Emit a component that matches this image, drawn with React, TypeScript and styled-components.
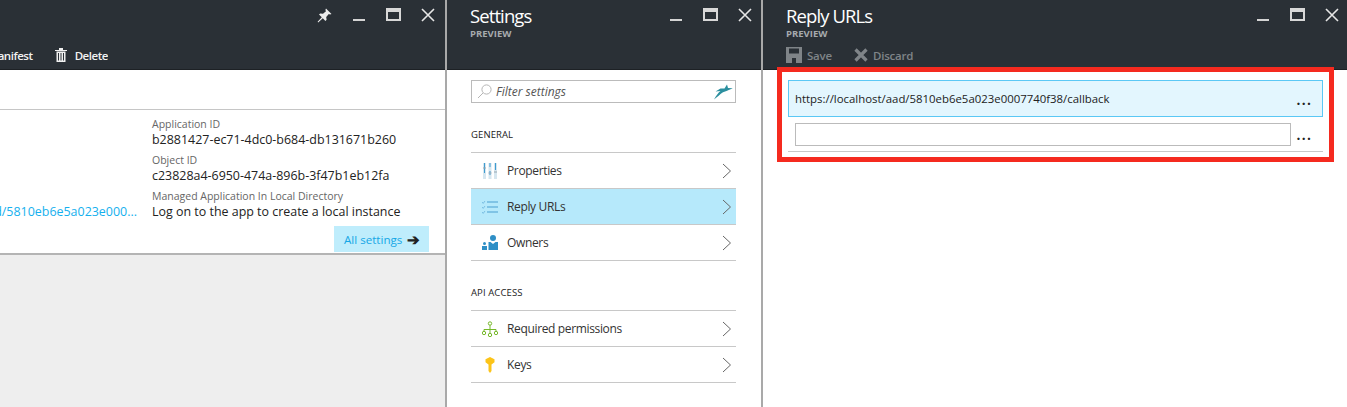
import styled, { createGlobalStyle } from "styled-components";

const GlobalStyle = createGlobalStyle`
  html, body {
    margin: 0;
    padding: 0;
    background: #fff;
    overflow: hidden;
  }
  * {
    box-sizing: border-box;
  }
  body {
    font-family: "Open Sans", "Noto Sans", "Liberation Sans", sans-serif;
    color: #222;
  }
`;

const PinIcon = () => (
  <svg width="15" height="15" viewBox="0 0 15 15">
    <path d="M9 0.5 14.5 6 13 6.6 11.8 6 9.2 9 9.6 11.8 8.4 13 5.8 10.2 1.2 14.4 0.6 13.8 4.8 9.2 2 6.6 3.2 5.4 6 5.8 9 3.2 8.4 2Z" fill="#ececec" />
  </svg>
);

const MinIcon = () => (
  <svg width="14" height="14" viewBox="0 0 14 14">
    <rect x="1" y="11" width="12" height="2" fill="#d4d4d4" />
  </svg>
);

const MaxIcon = () => (
  <svg width="15" height="14" viewBox="0 0 15 14">
    <path fillRule="evenodd" d="M0 0H15V13H0ZM2 4V11H13V4Z" fill="#d8d8d8" />
  </svg>
);

const CloseIcon = () => (
  <svg width="14" height="14" viewBox="0 0 14 14">
    <path d="M1 1 13 13M13 1 1 13" stroke="#e6e6e6" strokeWidth="1.6" />
  </svg>
);

const TrashIcon = () => (
  <svg width="12" height="14" viewBox="0 0 12 14">
    <path d="M0 2H12V3H0ZM4 0H8V2H4ZM1.5 3.5H10.5V14H1.5Z" fill="#f0f0f0" />
    <path d="M3.5 5V12.5M6 5V12.5M8.5 5V12.5" stroke="#2a3036" strokeWidth="1" />
  </svg>
);

const SaveIcon = () => (
  <svg width="16" height="16" viewBox="0 0 16 16">
    <path fillRule="evenodd" d="M0 0H16V16H0ZM3 1.5V6.5H13V1.5ZM6 11V16H10V11Z" fill="#7f8488" />
  </svg>
);

const DiscardIcon = () => (
  <svg width="14" height="14" viewBox="0 0 14 14">
    <path d="M1.5 1.5 12.5 12.5M12.5 1.5 1.5 12.5" stroke="#7f8488" strokeWidth="3.2" />
  </svg>
);

const SearchIcon = () => (
  <svg width="15" height="15" viewBox="0 0 15 15">
    <circle cx="9.5" cy="5.5" r="4.6" fill="none" stroke="#b5b5b5" />
    <path d="M6 9 1 14" stroke="#b5b5b5" />
  </svg>
);

const FilterMark = () => (
  <svg width="20" height="16" viewBox="0 0 20 16">
    <path d="M1 15.5 C3.5 11 5.5 8.5 7.5 7 L2.5 7.5 L7.5 4.6 L11.5 4.4 L14 0.5 L15 4 L19.8 4.2 L13.5 7 L10 8.2 C7 10 4.5 13 1 15.5Z" fill="#2b8f9f" />
  </svg>
);

const Chevron = () => (
  <svg width="10" height="16" viewBox="0 0 10 16">
    <path d="M1 1 8.5 8 1 15" fill="none" stroke="#666" strokeWidth="1" />
  </svg>
);

const PropertiesIcon = () => (
  <svg width="16" height="16" viewBox="0 0 16 16">
    <path d="M1 0H4V16H1ZM6.5 0H9.5V16H6.5ZM12 0H15V16H12Z" fill="#d6e6ef" />
    <path d="M2.5 0V10M8 0V4M8 8V12M13.5 0V7" stroke="#3e9bd0" strokeWidth="1" />
    <path d="M1 5H4M6.5 10H9.5M12 9H15" stroke="#9aa8b2" strokeWidth="1.2" />
  </svg>
);

const ListIcon = () => (
  <svg width="16" height="14" viewBox="0 0 16 14">
    <path d="M0 2 1.2 3.4 3 1M0 7 1.2 8.4 3 6M0 12 1.2 13.4 3 11" fill="none" stroke="#6bb4dc" strokeWidth="0.8" />
    <path d="M5 2H16M5 7H16M5 12H16" stroke="#4a9fd0" strokeWidth="1" />
  </svg>
);

const OwnersIcon = () => (
  <svg width="16" height="15" viewBox="0 0 16 15">
    <circle cx="11" cy="3" r="3" fill="#2f8fc6" />
    <path d="M6.5 7H8.5L11 9 13.5 7H16V15H6.5Z" fill="#2f8fc6" />
    <circle cx="2.5" cy="8.5" r="1.5" fill="#2f8fc6" />
    <path d="M0 11H5V15H0Z" fill="#2f8fc6" />
  </svg>
);

const PermissionsIcon = () => (
  <svg width="16" height="16" viewBox="0 0 16 16">
    <g fill="none" stroke="#76b82a" strokeWidth="1">
      <circle cx="8" cy="2.5" r="1.7" />
      <circle cx="2" cy="12" r="1.7" />
      <circle cx="8" cy="14" r="1.7" />
      <circle cx="14" cy="12" r="1.7" />
      <path d="M8 4.2V12.3M2 10.3V8.5H14V10.3" />
    </g>
  </svg>
);

const KeyIcon = () => (
  <svg width="16" height="16" viewBox="0 0 16 16">
    <path d="M8 0 12.5 2.2V5.2L9.5 7.5V14L8 16 6.5 14V7.5L3.5 5.2V2.2Z" fill="#fcc419" />
  </svg>
);

const Page = styled.div`
  position: relative;
  display: grid;
  grid-template-columns: 447px 316px 1fr;
  width: 1347px;
  height: 407px;
  overflow: hidden;
`;

const Blade = styled.section<{ $divider?: boolean }>`
  display: flex;
  flex-direction: column;
  min-width: 0;
  height: 407px;
  border-right: ${(p) => (p.$divider ? "2px solid #a9a9a9" : "none")};
`;

const Header = styled.header`
  position: relative;
  flex: none;
  height: 70px;
  padding: 4px 0 0 23px;
  background: #2a3036;
  border-bottom: 1px solid #1d2125;
  color: #fff;
`;

const Title = styled.h1`
  margin: 0;
  font-size: 18.5px;
  font-weight: 400;
  line-height: 24px;
  letter-spacing: -0.9px;
`;

const Preview = styled.div`
  font-size: 9.5px;
  font-weight: 700;
  line-height: 12px;
  color: #a6aaad;
`;

const Controls = styled.div<{ $shift: number }>`
  position: absolute;
  top: 8px;
  right: ${(p) => p.$shift}px;
  display: flex;
`;

const Control = styled.span`
  display: flex;
  align-items: center;
  justify-content: center;
  width: 34.5px;
  height: 14px;
`;

const Toolbar = styled.div<{ $end?: boolean }>`
  position: absolute;
  top: 45px;
  left: 0;
  right: 0;
  display: flex;
  align-items: center;
  gap: 22px;
  height: 20px;
  font-size: 11.5px;
  font-weight: 600;
  justify-content: ${(p) => (p.$end ? "flex-end" : "flex-start")};
  padding: ${(p) => (p.$end ? "0 337px 0 0" : "0 0 0 23px")};
  white-space: nowrap;
`;

const ToolButton = styled.span<{ $disabled?: boolean }>`
  display: inline-flex;
  align-items: center;
  gap: 5px;
  letter-spacing: -0.2px;
  color: ${(p) => (p.$disabled ? "#7f8488" : "#f2f2f2")};
`;

const ClippedBar = styled.div`
  display: flex;
  justify-content: flex-end;
  align-items: center;
  gap: 22px;
  width: 108px;
  overflow: hidden;
  flex: none;

  ${ToolButton} {
    gap: 8px;
    letter-spacing: -0.45px;
  }
`;

const Spacer = styled.div`
  flex: none;
  height: 40px;
  border-bottom: 1px solid #c6c6c6;
`;

const Essentials = styled.div`
  flex: none;
  display: grid;
  grid-template-columns: 152px 1fr;
  height: 145px;
  padding: 6px 0 0;
  border-bottom: 2px solid #b4b4b4;
`;

const LinkCell = styled.div`
  display: flex;
  justify-content: flex-end;
  align-self: start;
  min-width: 0;
  margin-top: 88px;
  padding-right: 15px;
  font-size: 12.45px;
  line-height: 16px;
  color: #15b0ee;
  white-space: nowrap;
  overflow: hidden;
`;

const LinkText = styled.span`
  flex: none;
`;

const Facts = styled.dl`
  margin: 0;
`;

const FactLabel = styled.dt`
  font-size: 10.5px;
  line-height: 16px;
  color: #666;
`;

const FactValue = styled.dd`
  margin: 0 0 4px;
  font-size: 12.45px;
  line-height: 16px;
  color: #222;
  white-space: nowrap;
`;

const SettingsButton = styled.div`
  display: inline-flex;
  align-items: center;
  gap: 5px;
  margin: 2px 0 0 182px;
  padding-left: 10px;
  width: 95px;
  height: 26px;
  background: #bfedfc;
  font-size: 11.6px;
  color: #15a7e6;
  white-space: nowrap;
`;

const Arrow = styled.span`
  font-size: 15px;
  font-weight: 700;
  line-height: 16px;
  color: #222;
`;

const Backdrop = styled.div`
  flex: 1;
  background: #eee;
`;

const SettingsBody = styled.div`
  padding: 10px 25px 0 24px;
`;

const Filter = styled.div`
  display: flex;
  align-items: center;
  gap: 4px;
  height: 23px;
  padding: 0 2px 0 5px;
  border: 1px solid #bbb;
  font-size: 12px;
  font-style: italic;
  color: #555;
`;

const FilterText = styled.span`
  flex: 1;
`;

const GroupTitle = styled.h2`
  margin: 24px 0 0;
  height: 25px;
  font-size: 9.5px;
  font-weight: 400;
  line-height: 15px;
  letter-spacing: 0.1px;
  color: #222;
`;

const MenuList = styled.div`
  border-top: 1px solid #c8c8c8;
`;

const MenuRow = styled.div<{ $active?: boolean }>`
  display: grid;
  grid-template-columns: 25px 1fr 14px;
  align-items: center;
  height: 36px;
  padding-left: 11px;
  font-size: 12px;
  letter-spacing: -0.35px;
  color: #333;
  background: ${(p) => (p.$active ? "#b6e9fb" : "transparent")};
  border-bottom: 1px solid #c8c8c8;
`;

const RowIcon = styled.span`
  display: flex;
  align-items: center;
  justify-content: flex-start;
`;

const ReplyBody = styled.div`
  padding: 10px 24px 0 25px;
`;

const UrlRow = styled.div`
  display: flex;
  align-items: center;
  justify-content: space-between;
  height: 37px;
  padding: 0 10px 0 6px;
  background: #e3f6fe;
  border: 1px solid #5bc8f5;
  font-size: 11.4px;
  color: #222;
`;

const InputRow = styled.div`
  display: flex;
  align-items: center;
  justify-content: space-between;
  height: 35px;
  padding: 0 11px 0 7px;
  border-bottom: 1px solid #c8c8c8;
`;

const EmptyInput = styled.div`
  width: 496px;
  height: 23px;
  margin-top: 1px;
  border: 1px solid #bbb;
  background: #fff;
`;

const More = styled.span`
  align-self: flex-end;
  margin-bottom: 9px;
  font-size: 16px;
  font-weight: 600;
  line-height: 16px;
  letter-spacing: 0.9px;
  color: #222;
`;

const Callout = styled.div`
  position: absolute;
  left: 777px;
  top: 67px;
  width: 557px;
  height: 95px;
  border: 5px solid #f52a1f;
  pointer-events: none;
`;

const WindowControls = ({ pin, shift = 0 }: { pin?: boolean; shift?: number }) => (
  <Controls $shift={shift}>
    {pin && (
      <Control>
        <PinIcon />
      </Control>
    )}
    <Control>
      <MinIcon />
    </Control>
    <Control>
      <MaxIcon />
    </Control>
    <Control>
      <CloseIcon />
    </Control>
  </Controls>
);

const App = () => {
  return (
    <Page>
      <GlobalStyle />

      <Blade $divider>
        <Header>
          <WindowControls pin />
          <Toolbar $end>
            <ClippedBar>
              <ToolButton>Manifest</ToolButton>
              <ToolButton>
                <TrashIcon />
                Delete
              </ToolButton>
            </ClippedBar>
          </Toolbar>
        </Header>
        <Spacer />
        <Essentials>
          <LinkCell>
            <LinkText>d/5810eb6e5a023e000...</LinkText>
          </LinkCell>
          <Facts>
            <FactLabel>Application ID</FactLabel>
            <FactValue>b2881427-ec71-4dc0-b684-db131671b260</FactValue>
            <FactLabel>Object ID</FactLabel>
            <FactValue>c23828a4-6950-474a-896b-3f47b1eb12fa</FactValue>
            <FactLabel>Managed Application In Local Directory</FactLabel>
            <FactValue>Log on to the app to create a local instance</FactValue>
            <SettingsButton>
              All settings <Arrow>➔</Arrow>
            </SettingsButton>
          </Facts>
        </Essentials>
        <Backdrop />
      </Blade>

      <Blade $divider>
        <Header>
          <Title>Settings</Title>
          <Preview>PREVIEW</Preview>
          <WindowControls shift={-1} />
        </Header>
        <SettingsBody>
          <Filter>
            <SearchIcon />
            <FilterText>Filter settings</FilterText>
            <FilterMark />
          </Filter>
          <GroupTitle>GENERAL</GroupTitle>
          <MenuList>
            <MenuRow>
              <RowIcon>
                <PropertiesIcon />
              </RowIcon>
              Properties
              <Chevron />
            </MenuRow>
            <MenuRow $active>
              <RowIcon>
                <ListIcon />
              </RowIcon>
              Reply URLs
              <Chevron />
            </MenuRow>
            <MenuRow>
              <RowIcon>
                <OwnersIcon />
              </RowIcon>
              Owners
              <Chevron />
            </MenuRow>
          </MenuList>
          <GroupTitle>API ACCESS</GroupTitle>
          <MenuList>
            <MenuRow>
              <RowIcon>
                <PermissionsIcon />
              </RowIcon>
              Required permissions
              <Chevron />
            </MenuRow>
            <MenuRow>
              <RowIcon>
                <KeyIcon />
              </RowIcon>
              Keys
              <Chevron />
            </MenuRow>
          </MenuList>
        </SettingsBody>
      </Blade>

      <Blade>
        <Header>
          <Title>Reply URLs</Title>
          <Preview>PREVIEW</Preview>
          <WindowControls shift={-2} />
          <Toolbar>
            <ToolButton $disabled>
              <SaveIcon />
              Save
            </ToolButton>
            <ToolButton $disabled>
              <DiscardIcon />
              Discard
            </ToolButton>
          </Toolbar>
        </Header>
        <ReplyBody>
          <UrlRow>
            https://localhost/aad/5810eb6e5a023e0007740f38/callback
            <More>...</More>
          </UrlRow>
          <InputRow>
            <EmptyInput />
            <More>...</More>
          </InputRow>
        </ReplyBody>
      </Blade>

      <Callout />
    </Page>
  );
};

export default App;
